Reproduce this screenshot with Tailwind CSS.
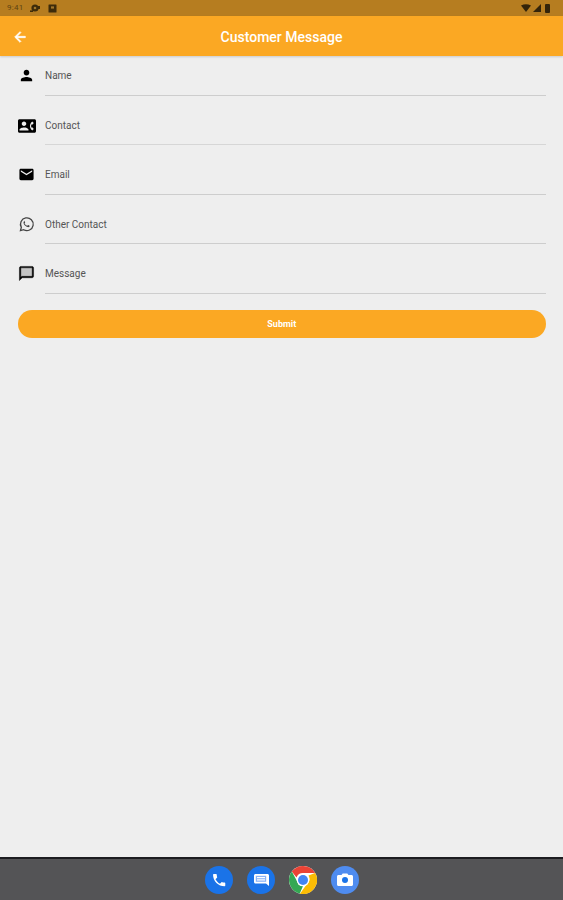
<!DOCTYPE html>
<html lang="en">
  <head>
    <meta charset="UTF-8" />
    <meta name="viewport" content="width=device-width, initial-scale=1.0" />
    <title>Customer Message</title>
    <script src="https://cdn.jsdelivr.net/npm/@tailwindcss/browser@4"></script>
  </head>
  <body class="bg-[#eeeeee] font-[Roboto,sans-serif] w-[563px] h-[900px] overflow-hidden flex flex-col">
    <!-- status bar -->
    <div class="h-[16px] bg-[#b67d20] flex items-center px-[7px] shrink-0">
      <span class="text-[8px] leading-none text-[#5f4413] tracking-[0.3px]">9:41</span>
      <svg class="ml-[6px] w-[10px] h-[10px]" viewBox="0 0 10 10" fill="#3d2b0a"><circle cx="5" cy="5" r="3.6"/><rect x="0" y="7.400" width="3" height="1.600"/><rect x="8" y="3" width="2" height="3"/><circle cx="5" cy="5" r="1.300" fill="#a2762b"/></svg>
      <svg class="ml-[8px] w-[9px] h-[9px]" viewBox="0 0 9 9" fill="#3d2b0a"><path d="M1 0.5h7a.5.5 0 0 1 .5.5v7a.5.5 0 0 1-.5.5H1a.5.5 0 0 1-.5-.5V1A.5.5 0 0 1 1 .5z"/><rect x="3" y="2.400" width="3" height="2.200" fill="#a2762b"/></svg>
      <div class="ml-auto flex items-center gap-[2px] pr-[6px]">
        <svg class="w-[10px] h-[8px]" viewBox="0 0 10 8" fill="#33240a"><path d="M0 1.500Q5 -1 10 1.500L5 8z"/></svg>
        <svg class="w-[8px] h-[8px]" viewBox="0 0 8 8" fill="#33240a"><path d="M8 0V8H0z"/></svg>
        <svg class="ml-[2px] w-[5px] h-[9px]" viewBox="0 0 5 9" fill="#33240a"><rect width="5" height="9" rx="1"/></svg>
      </div>
    </div>

    <!-- app bar -->
    <div class="h-[40px] bg-[#fba823] relative flex items-center justify-center shrink-0 shadow-[0_1px_2px_rgba(0,0,0,0.15)]">
      <svg class="absolute left-[12px] top-[12.500px] w-[16px] h-[16px]" viewBox="0 0 24 24" fill="#fff" stroke="#fff" stroke-width="1"><path d="M20 11H7.830l5.590-5.590L12 4l-8 8 8 8 1.410-1.410L7.830 13H20v-2z"/></svg>
      <span class="text-white text-[14px] font-medium pt-[3px]">Customer Message</span>
    </div>

    <!-- form -->
    <div class="pl-[17.500px] pr-[17px] flex flex-col">
      <div class="flex h-[49.500px] shrink-0">
        <div class="w-[27.500px] pt-[11px] shrink-0">
          <svg class="w-[17px] h-[17px]" viewBox="0 0 24 24" fill="#000"><path d="M12 12c2.210 0 4-1.790 4-4s-1.790-4-4-4-4 1.790-4 4 1.790 4 4 4zm0 2c-2.670 0-8 1.340-8 4v2h16v-2c0-2.660-5.330-4-8-4z"/></svg>
        </div>
        <div class="flex-1 border-b-[1.500px] border-[#cdcdcd] h-[39.500px] pt-[13px] text-[10px] leading-[13px] text-[#555]">Name</div>
      </div>
      <div class="flex h-[49.500px] shrink-0">
        <div class="w-[27.500px] pt-[11px] shrink-0">
          <svg class="w-[18px] h-[18px]" viewBox="0 0 24 24" fill="#000"><path d="M22 3H2C.9 3 0 3.900 0 5v14c0 1.100.9 2 2 2h20c1.100 0 1.990-.9 1.990-2L24 5c0-1.100-.9-2-2-2zM8 6c1.660 0 3 1.340 3 3s-1.340 3-3 3-3-1.340-3-3 1.340-3 3-3zm6 12H2v-1c0-2 4-3.100 6-3.100s6 1.100 6 3.100v1zm3.850-4h1.640L21 16l-1.990 1.990c-1.310-.98-2.280-2.380-2.730-3.990-.18-.64-.28-1.310-.28-2s.1-1.360.28-2c.45-1.620 1.420-3.010 2.730-3.990L21 8l-1.510 2h-1.640c-.22.63-.35 1.300-.35 2s.13 1.370.35 2z"/></svg>
        </div>
        <div class="flex-1 border-b-[1.500px] border-[#d6d6d6] h-[39.500px] pt-[13px] text-[10px] leading-[13px] text-[#555]">Contact</div>
      </div>
      <div class="flex h-[49.500px] shrink-0">
        <div class="w-[27.500px] pt-[11px] shrink-0">
          <svg class="w-[17px] h-[17px]" viewBox="0 0 24 24" fill="#000"><path d="M20 4H4c-1.100 0-1.990.9-1.990 2L2 18c0 1.100.9 2 2 2h16c1.100 0 2-.9 2-2V6c0-1.100-.9-2-2-2zm0 4l-8 5-8-5V6l8 5 8-5v2z"/></svg>
        </div>
        <div class="flex-1 border-b-[1.500px] border-[#cdcdcd] h-[39.500px] pt-[13px] text-[10px] leading-[13px] text-[#555]">Email</div>
      </div>
      <div class="flex h-[49.500px] shrink-0">
        <div class="w-[27.500px] pt-[11px] shrink-0">
          <svg class="w-[17px] h-[17px]" viewBox="0 0 24 24" fill="none" stroke="#444" stroke-width="1.800"><path d="M3.500 20.500l1.200-4.400A9 9 0 1 1 8 19.400z"/><path fill="#444" stroke="none" d="M9 7.500c-.4 0-1.200.6-1.200 1.900 0 1.600 1.200 3.200 2.700 4.500 1.600 1.400 3 1.900 4 1.900 1.100 0 1.900-.8 2-1.600 0-.3 0-.5-.2-.6l-1.800-.9c-.2-.1-.4 0-.5.1l-.8 1c-.1.1-.3.2-.5.1-1.500-.6-2.800-1.900-3.400-3.200-.1-.2 0-.4.1-.5l.6-.8c.1-.1.1-.3 0-.5l-.8-1.900c-.1-.3-.3-.4-.5-.4z"/></svg>
        </div>
        <div class="flex-1 border-b-[1.500px] border-[#cdcdcd] h-[39.500px] pt-[13px] text-[10px] leading-[13px] text-[#555]">Other Contact</div>
      </div>
      <div class="flex h-[49.500px] shrink-0">
        <div class="w-[27.500px] pt-[11px] shrink-0">
          <svg class="w-[17px] h-[17px]" viewBox="0 0 24 24" fill="#000" stroke="#000" stroke-width="0.6"><rect x="4" y="4" width="16" height="12" fill="#c4c4c4" stroke="none"/><path d="M20 2H4c-1.100 0-2 .9-2 2v18l4-4h14c1.100 0 2-.9 2-2V4c0-1.100-.9-2-2-2zm0 14H5.170L4 17.170V4h16v12z"/></svg>
        </div>
        <div class="flex-1 border-b-[1.500px] border-[#cdcdcd] h-[39.500px] pt-[13px] text-[10px] leading-[13px] text-[#555]">Message</div>
      </div>
      <button class="mt-[6.500px] h-[28px] pt-[2px] rounded-full bg-[#fba823] text-white text-[9px] font-bold">Submit</button>
    </div>

    <!-- nav bar -->
    <div class="mt-auto h-[43px] bg-[#545456] border-t-2 border-[#1c1c20] flex items-center justify-center gap-[14px] shrink-0">
      <svg class="w-[28px] h-[28px]" viewBox="0 0 28 28"><circle cx="14" cy="14" r="14" fill="#1a73e8"/><g transform="translate(6 6) scale(.68)"><path fill="#fff" d="M6.620 10.790c1.440 2.830 3.760 5.140 6.590 6.590l2.200-2.200c.27-.27.67-.36 1.020-.24 1.120.37 2.330.57 3.570.57.550 0 1 .45 1 1V20c0 .55-.45 1-1 1-9.390 0-17-7.610-17-17 0-.55.45-1 1-1h3.500c.55 0 1 .45 1 1 0 1.250.2 2.450.57 3.570.11.350.03.740-.25 1.020l-2.200 2.200z"/></g></svg>
      <svg class="w-[28px] h-[28px]" viewBox="0 0 28 28"><circle cx="14" cy="14" r="14" fill="#1a73e8"/><path fill="#fff" d="M7 9.500c0-.8.7-1.500 1.500-1.500h12c.8 0 1.500.7 1.500 1.500v10.500l-3-2.500H8.500c-.8 0-1.500-.7-1.500-1.500z"/><path fill="#8ab4f8" d="M8.800 9.800h10.400v6H8.800z"/><rect x="10" y="11" width="8" height="1.200" fill="#fff"/><rect x="10" y="13.300" width="8" height="1.200" fill="#fff"/></svg>
      <svg class="w-[28px] h-[28px]" viewBox="0 0 28 28"><circle cx="14" cy="14" r="14" fill="#fff"/><path fill="#ea4335" d="M14 0a14 14 0 0 1 12.120 7H14a7 7 0 0 0-6.500 4.400L2.800 5.600A14 14 0 0 1 14 0z"/><path fill="#34a853" d="M2.800 5.600l5.400 9.800a6 6 0 0 0 5.800 4.600l-3.200 7.600A14 14 0 0 1 2.800 5.600z"/><path fill="#fbbc04" d="M26.120 7A14 14 0 0 1 11 27.700L17.200 19A7 7 0 0 0 19.500 9.500z"/><circle cx="14" cy="14" r="6.300" fill="#fff"/><circle cx="14" cy="14" r="5" fill="#4285f4"/></svg>
      <svg class="w-[28px] h-[28px]" viewBox="0 0 28 28"><circle cx="14" cy="14" r="14" fill="#4f8cf0"/><path fill="#fff" d="M7.500 9h3l1.200-1.500h4.600L17.500 9h3c.8 0 1.500.7 1.500 1.500v8c0 .8-.7 1.500-1.500 1.500h-13c-.8 0-1.500-.7-1.500-1.500v-8C6 9.700 6.700 9 7.500 9z"/><circle cx="14" cy="14" r="3" fill="#1a73e8"/></svg>
    </div>
  </body>
</html>
